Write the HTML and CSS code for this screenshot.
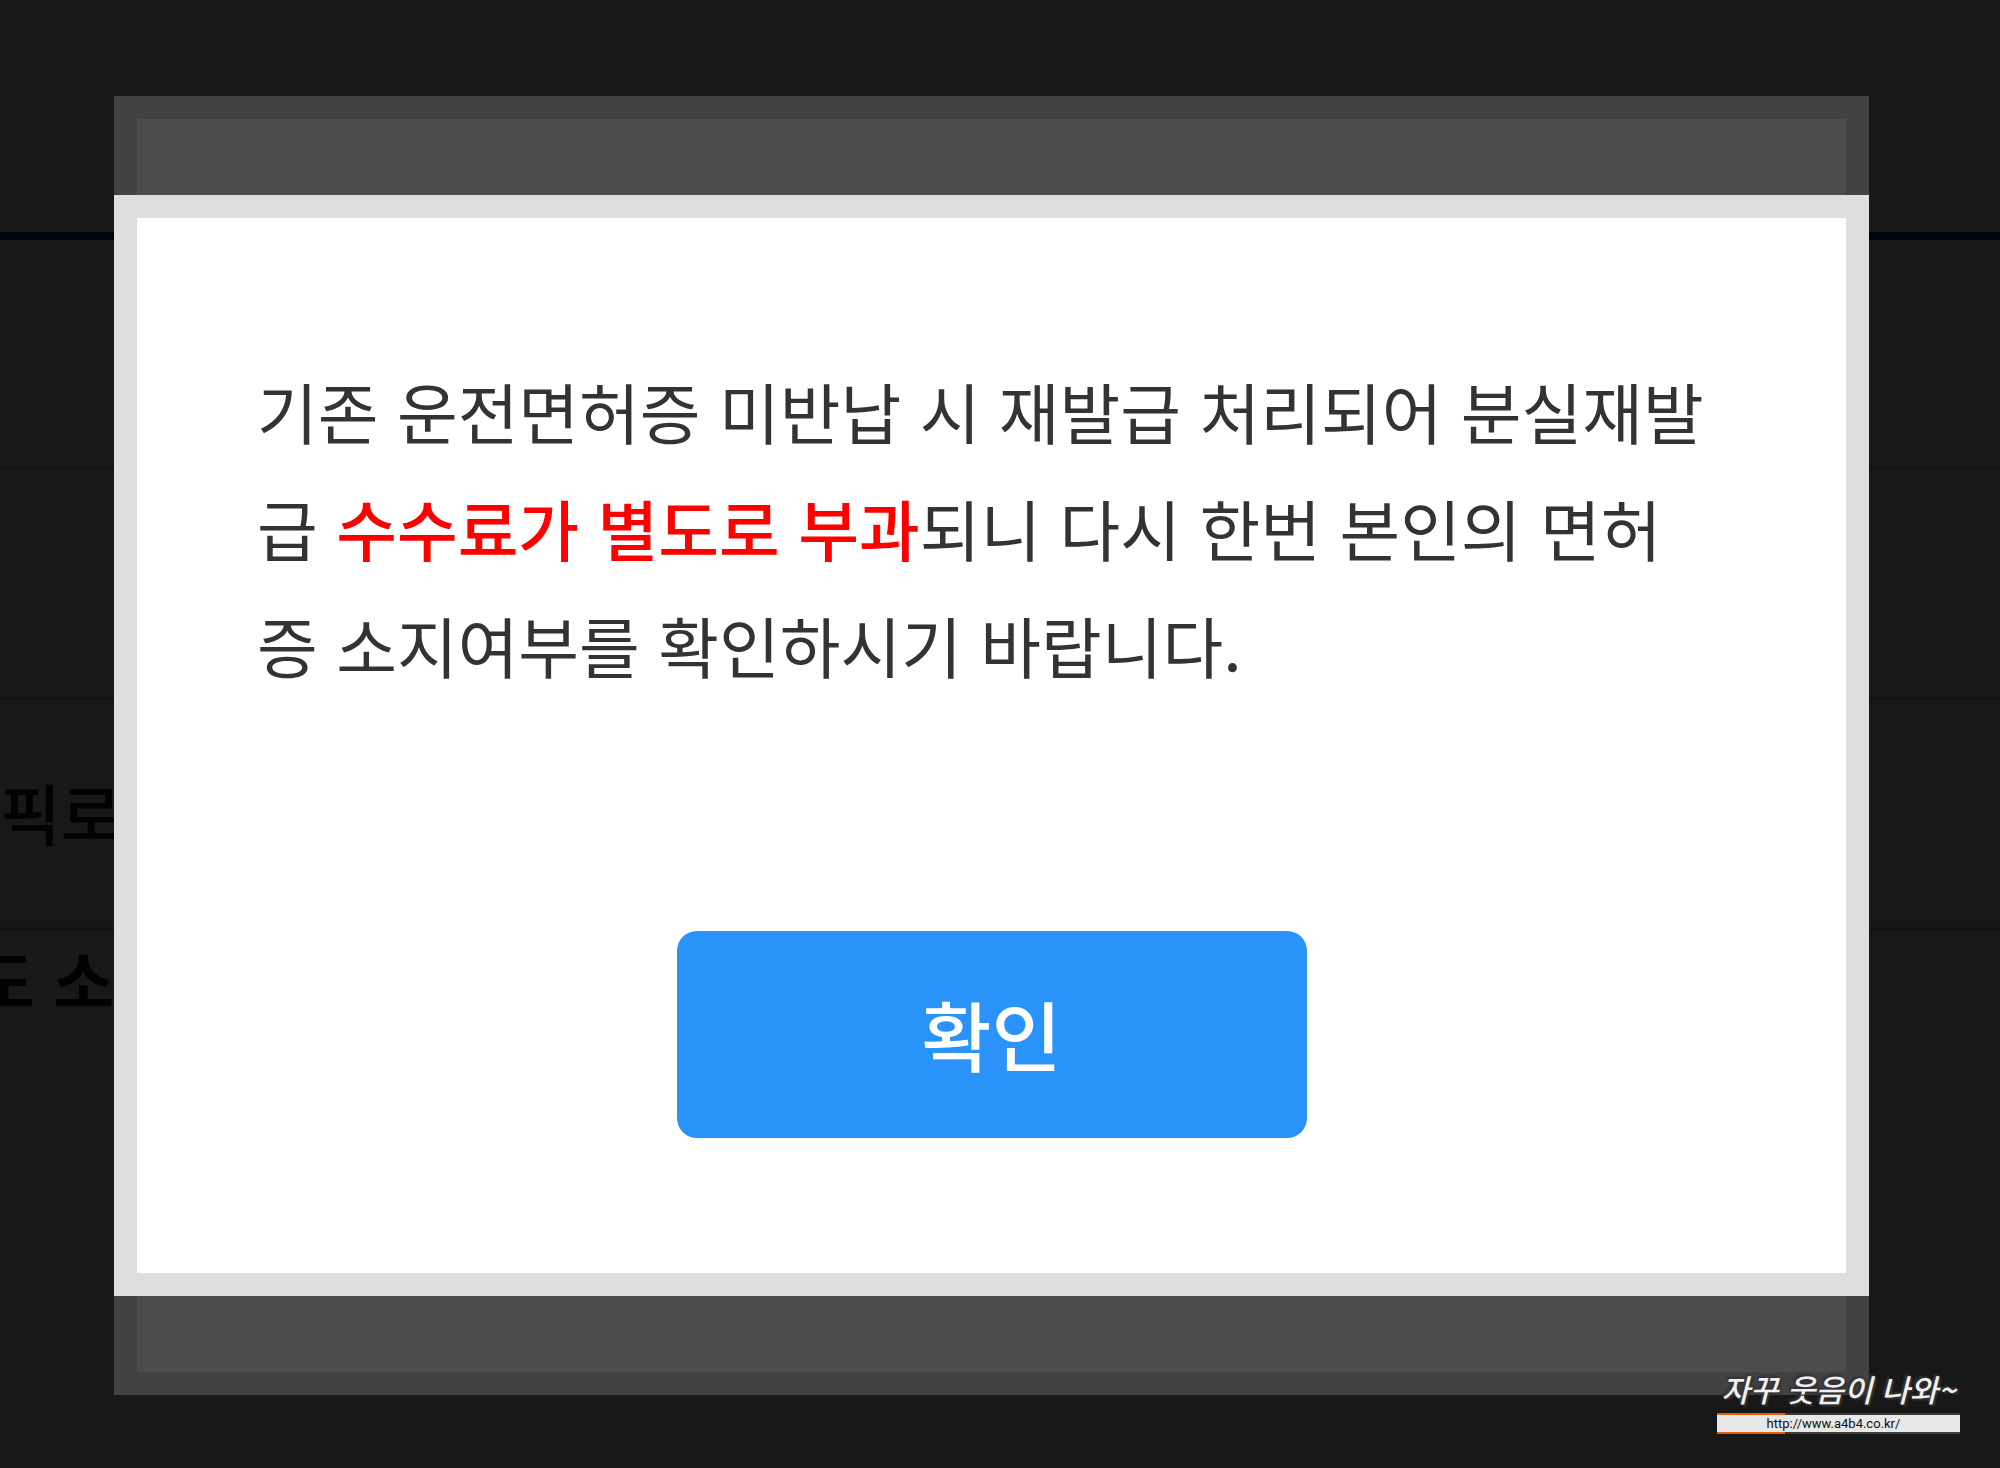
FILE: index.html
```html
<!DOCTYPE html>
<html lang="ko">
<head>
    <meta charset="UTF-8">
    <meta name="viewport" content="width=device-width, initial-scale=1.0">
    <title>운전면허증 재발급</title>
    <link rel="stylesheet" href="styles.css">
</head>
<body>
    <div class="page">
        <div class="row"></div>
        <div class="row"></div>
        <div class="row">픽로</div>
        <div class="row notice">도 소</div>
    </div>

    <div class="overlay">
        <div class="back-popup">
            <div class="popup" role="dialog" aria-modal="true" aria-describedby="message">
                <p class="message" id="message">기존 운전면허증 미반납 시 재발급 처리되어 분실재발급 <em>수수료가 별도로 부과</em>되니 다시 한번 본인의 면허증 소지여부를 확인하시기 바랍니다.</p>
                <button class="confirm" type="button">확인</button>
            </div>
        </div>
    </div>

    <div class="signature">
        <span class="signature-name">자꾸 웃음이 나와~</span>
        <a class="signature-link" href="http://www.a4b4.co.kr/">http://www.a4b4.co.kr/</a>
    </div>
</body>
</html>
```
FILE: styles.css
```css
* {
    box-sizing: border-box;
}
body {
    margin: 0;
    min-height: 100vh;
    position: relative;
    overflow: hidden;
    background: #181818;
    color: #333;
    font-family: "Noto Sans CJK KR", sans-serif;
}

/* dimmed page */
.page {
    margin-top: 232px;
    border-top: 8px solid #00040f;
    color: #020202;
    font-size: 66px;
    font-weight: 500;
}
.row {
    height: 230px;
    line-height: 222px;
    border-bottom: 3px solid #131313;
    white-space: nowrap;
}
.notice {
    line-height: 96px;
    text-indent: -26px;
    border-bottom: none;
    font-weight: 700;
}

/* popups */
.overlay {
    position: absolute;
    inset: 0;
    padding: 96px 131px 73px 114px;
}
.back-popup {
    height: 100%;
    padding: 76px 0;
    background: #4c4c4c;
    border: 23px solid #424242;
}
.popup {
    display: flex;
    flex-direction: column;
    align-items: center;
    justify-content: space-between;
    height: 100%;
    margin: 0 -23px;
    padding: 134px 120px 135px;
    background: #fff;
    border: 23px solid #dedede;
}
.message {
    width: 100%;
    margin: 0;
    padding-right: 20px;
    font-size: 66px;
    line-height: 117px;
    word-break: break-all;
}
.message em {
    color: #f00;
    font-style: normal;
    font-weight: 500;
}
.confirm {
    width: 630px;
    height: 207px;
    padding: 0 0 4px;
    border: none;
    border-radius: 20px;
    background: #2993f9;
    color: #fff;
    font-family: inherit;
    font-size: 76px;
    font-weight: 500;
    cursor: pointer;
}

/* site signature */
.signature {
    position: absolute;
    right: 40px;
    bottom: 34px;
    width: 243px;
    text-align: center;
}
.signature-name {
    display: block;
    color: #f0f0f0;
    font-size: 31px;
    font-weight: 500;
    font-style: italic;
    line-height: 48px;
    white-space: nowrap;
    text-shadow: 0 0 3px #333, 2px 2px 2px #333, -2px -2px 2px #333;
}
.signature-link {
    display: block;
    padding-right: 10px;
    border: solid #3c3c3c;
    border-width: 2px 0;
    border-image: linear-gradient(to right, #e85d00 69px, #3c3c3c 69px) 2;
    background: #e8e8e8;
    color: #111;
    font-family: Roboto, sans-serif;
    font-size: 13px;
    line-height: 17px;
    text-decoration: none;
}
```
